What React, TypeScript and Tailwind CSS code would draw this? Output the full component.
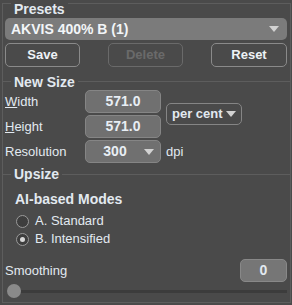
import React from "react";

// little down-pointing triangle used in the combo boxes
function Arrow({ className = "" }: { className?: string }) {
  return (
    <svg width="10" height="6" viewBox="0 0 10 6" className={className}>
      <path d="M0 0h10L5 6z" fill="#d2d2d2" />
    </svg>
  );
}

function Radio({ checked, label }: { checked?: boolean; label: string }) {
  return (
    <div className="flex items-center h-[18px] pl-[11px]">
      <span className="w-[13px] h-[13px] rounded-full border border-[#9a9a9a] bg-[#3e3e3e] flex items-center justify-center">
        {checked && <span className="w-[5px] h-[5px] rounded-full bg-[#d8d8d8]" />}
      </span>
      <span className="ml-[6px]">{label}</span>
    </div>
  );
}

function Field({ value, withArrow }: { value: string; withArrow?: boolean }) {
  return (
    <div className="w-[76px] h-[23px] rounded-[5px] border border-[#858585] bg-[#707070] flex items-center justify-center relative font-bold text-[14px] text-[#e8eef4]">
      <span className={withArrow ? "-ml-[16px]" : ""}>{value}</span>
      {withArrow && <Arrow className="absolute right-[6px]" />}
    </div>
  );
}

export default function App() {
  return (
    <div className="w-[292px] h-[305px] bg-[#4a4a4a] pt-[3px] overflow-hidden text-[13px] text-[#e2e9f0] font-['Liberation_Sans',Arial,sans-serif]">
      {/* Presets */}
      <div className="ml-[2px] mr-[1px] border-x border-t border-[#5d5d5d] pl-[2px] pr-[3px] pb-[14px]">
        <div className="-mt-[3px] ml-[6px] px-[3px] w-fit bg-[#4a4a4a] font-bold text-[14px] leading-[16px]">Presets</div>
        <div className="mt-[1px] h-[22px] rounded-[5px] bg-[#7b7b7b] flex items-center justify-between pl-[6px] pr-[8px] font-bold text-[14px] text-[#f2f5f8]">
          <span>AKVIS 400% B (1)</span>
          <Arrow />
        </div>
        <div className="mt-[3px] flex justify-between">
          <button className="w-[75px] h-[24px] rounded-[5px] border border-[#8a8a8a] font-bold text-[13px] text-[#eef2f6]">Save</button>
          <button className="w-[75px] h-[24px] rounded-[5px] border border-[#6a6a6a] font-bold text-[13px] text-[#6a6a6a]">Delete</button>
          <button className="w-[76px] h-[24px] rounded-[5px] border border-[#8a8a8a] font-bold text-[13px] text-[#eef2f6]">Reset</button>
        </div>
      </div>

      {/* New Size */}
      <div className="ml-[2px] mr-[1px] border-x border-t border-[#5d5d5d] pl-[2px] pr-[3px] pb-[11px]">
        <div className="-mt-[8px] ml-[6px] px-[3px] w-fit bg-[#4a4a4a] font-bold text-[14px] leading-[16px]">New Size</div>
        <div className="grid grid-cols-[75px_76px_auto] grid-rows-[23px_23px_23px] gap-x-[5px] gap-y-[2px] items-center">
          <span><span className="underline">W</span>idth</span>
          <Field value="571.0" />
          <div className="row-span-2 self-center">
            <div className="w-[76px] h-[22px] rounded-[5px] border border-[#858585] flex items-center justify-between pl-[5px] pr-[5px] font-bold text-[13px]">
              <span>per cent</span>
              <Arrow />
            </div>
          </div>
          <span><span className="underline">H</span>eight</span>
          <Field value="571.0" />
          <span>Resolution</span>
          <Field value="300" withArrow />
          <span>dpi</span>
        </div>
      </div>

      {/* Upsize */}
      <div className="ml-[2px] mr-[1px] h-[129px] border border-[#5d5d5d] pl-[2px] pr-[3px]">
        <div className="-mt-[9px] ml-[6px] px-[3px] w-fit bg-[#4a4a4a] font-bold text-[14px] leading-[16px]">Upsize</div>
        <div className="mt-[9px] ml-[10px] font-bold text-[14px] leading-[16px]">AI-based Modes</div>
        <div className="mt-[5px]">
          <Radio label="A. Standard" />
          <Radio label="B. Intensified" checked />
        </div>
        <div className="mt-[11px] flex items-center justify-between">
          <span>Smoothing</span>
          <div className="w-[47px] h-[23px] rounded-[5px] border border-[#888] bg-[#767676] flex items-center justify-center font-bold text-[14px]">0</div>
        </div>
        <div className="mt-[2px] h-[14px] flex items-center">
          <div className="w-[14px] h-[14px] rounded-full bg-[#8a8a8a] ml-[2px]" />
          <div className="flex-1 h-[3px] bg-[#3c3c3c]" />
        </div>
      </div>
    </div>
  );
}
